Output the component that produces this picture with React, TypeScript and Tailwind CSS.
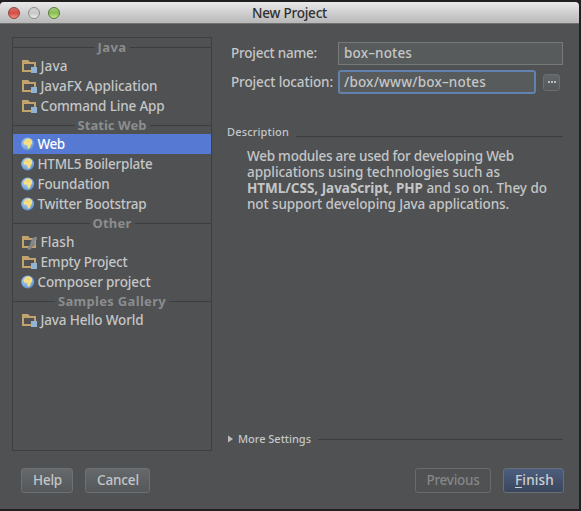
import { useLayoutEffect, useRef, useState } from 'react';
import type { ReactNode } from 'react';

/** One line of text whose tracking is adjusted so that it fills the given width. */
function Label({ width, className = '', children }: { width: number; className?: string; children: ReactNode }) {
  const ref = useRef<HTMLSpanElement>(null);
  const [tracking, setTracking] = useState(0);
  useLayoutEffect(() => {
    const el = ref.current;
    if (!el) return;
    el.style.letterSpacing = '0px';
    const natural = el.getBoundingClientRect().width;
    const next = (width - natural) / (el.textContent?.length || 1);
    el.style.letterSpacing = `${next}px`;
    setTracking(next);
  }, [width]);
  return (
    <span ref={ref} className={`inline-block shrink-0 whitespace-nowrap ${className}`} style={{ letterSpacing: tracking }}>
      {children}
    </span>
  );
}

function FolderIcon({ flash = false }: { flash?: boolean }) {
  return (
    <svg width="16" height="16" viewBox="0 0 16 16" className="shrink-0">
      <path d="M1 2h6l2 2h6v10H1zM3 6v6h10V6z" fill="#c1a36b" fillRule="evenodd" />
      {flash ? (
        <path d="M15.800 3c-4 0-5 2-6 5l-1 3c-.5 1.500-1 2-2 2v2.800c3.500 0 4.500-1.800 5.500-4.800h2V8.200h-1c.5-1.500 1-2.200 2.500-2.200z" fill="#85878a" />
      ) : (
        <path d="M10 9h6v6h-6z" fill="#91b4d4" />
      )}
    </svg>
  );
}

function GlobeIcon() {
  return (
    <svg width="14" height="14" viewBox="0 0 14 14" className="shrink-0">
      <defs>
        <radialGradient id="sea" cx=".4" cy=".35" r=".75">
          <stop offset="0" stopColor="#b4d2ef" />
          <stop offset=".65" stopColor="#78a8e0" />
          <stop offset="1" stopColor="#4a80c6" />
        </radialGradient>
      </defs>
      <circle cx="6.700" cy="7" r="6.500" fill="url(#sea)" />
      <path d="M3.400 4 4.800 2.300 7 1.500l2.300.5 1.700 1.400.1 3.200-1.400 1.600-.4 2.100-1.400 1.500-1.200-.4-.3-2.800-.9-.9-2.300-.1-.8-1.800z" fill="#f7df80" />
      <path d="M5.300 3.800l1.800.7 2-.5" stroke="#d0c684" strokeWidth=".6" fill="none" />
    </svg>
  );
}

function Heading({ text, width }: { text: string; width: number }) {
  return (
    <div className="flex h-[18px] items-center text-[13px] font-bold text-[#8b8d8f]">
      <div className="h-px flex-1 bg-[#3b3d3e]" />
      <Label width={width} className="mx-[3px] leading-[18px]">{text}</Label>
      <div className="h-px flex-1 bg-[#3b3d3e]" />
    </div>
  );
}

type Kind = 'folder' | 'flash' | 'globe';

function Row({ text, width, kind = 'folder', selected = false }: { text: string; width: number; kind?: Kind; selected?: boolean }) {
  return (
    <div className={`flex h-5 items-center pl-2 ${selected ? 'bg-[#567ad3] text-white' : ''}`}>
      {kind === 'globe' ? <GlobeIcon /> : <FolderIcon flash={kind === 'flash'} />}
      <Label width={width} className={`pt-px leading-[19px] ${kind === 'globe' ? 'ml-[2.500px]' : 'ml-[3.500px]'}`}>{text}</Label>
    </div>
  );
}

function TitleBar() {
  return (
    <div className="relative flex h-[22px] shrink-0 items-center justify-center rounded-t-[4px] border-b border-[#707070] bg-linear-to-b from-[#e9e9e9] to-[#b8b8b8] text-[#303030]">
      <div className="absolute left-2 top-[5px] flex gap-2">
        <div className="size-3 rounded-full border border-[#8f413b] bg-linear-to-b from-[#d0716a] via-[#d64c43] to-[#f08d80]" />
        <div className="size-3 rounded-full border border-[#8b8b8b] bg-linear-to-b from-[#d6d6d6] via-[#c6c6c6] to-[#ececec]" />
        <div className="size-3 rounded-full border border-[#557a35] bg-linear-to-b from-[#a5cb7d] via-[#86bd51] to-[#c3ee90]" />
      </div>
      <Label width={75} className="leading-5">New Project</Label>
    </div>
  );
}

function Sidebar() {
  return (
    <div className="h-[414px] w-[200px] shrink-0 border border-[#3c3e3f]">
      <Heading text="Java" width={29} />
      <Row text="Java" width={27} />
      <Row text="JavaFX Application" width={117} />
      <Row text="Command Line App" width={124} />
      <Heading text="Static Web" width={69} />
      <Row text="Web" width={27} kind="globe" selected />
      <Row text="HTML5 Boilerplate" width={115} kind="globe" />
      <Row text="Foundation" width={72} kind="globe" />
      <Row text="Twitter Bootstrap" width={109} kind="globe" />
      <Heading text="Other" width={39} />
      <Row text="Flash" width={34} kind="flash" />
      <Row text="Empty Project" width={87} />
      <Row text="Composer project" width={113} kind="globe" />
      <Heading text="Samples Gallery" width={108} />
      <Row text="Java Hello World" width={103} />
    </div>
  );
}

function Details() {
  return (
    <div className="ml-[15px] flex h-[414px] w-[336px] flex-col">
      <div className="mt-[5px] flex h-[23px] items-center">
        <Label width={86} className="ml-[4px]">Project name:</Label>
        <div className="ml-auto flex h-[23px] w-[225px] items-center border border-[#767a7b] bg-[#575b5c] pl-[5px]">
          <Label width={68}>box–notes</Label>
        </div>
      </div>
      <div className="mt-[5px] flex h-6 items-center">
        <Label width={102} className="ml-[4px] pt-px">Project location:</Label>
        <div className="ml-[5px] flex h-6 w-[198px] items-center rounded-[3px] border-2 border-[#6181ae] bg-[#575b5c] pl-[4px] pt-px">
          <Label width={142}>/box/www/box–notes</Label>
        </div>
        <div className="ml-[7px] flex h-[17px] w-[17px] items-center justify-center gap-px rounded-[3px] border border-[#6b6f71] bg-linear-to-b from-[#626668] to-[#54585b]">
          <i className="size-[2px] bg-[#bbbbbb]" />
          <i className="size-[2px] bg-[#bbbbbb]" />
          <i className="size-[2px] bg-[#bbbbbb]" />
        </div>
      </div>
      <div className="mt-[30px] flex h-4 text-[11px] leading-4">
        <Label width={62}>Description</Label>
        <div className="ml-[7px] mt-[12px] h-px flex-1 bg-[#3b3d3e]" />
      </div>
      <div className="mt-[8px] flex flex-col items-start pl-5 leading-4">
        <Label width={267} className="h-4">Web modules are used for developing Web</Label>
        <Label width={253} className="h-4">applications using technologies such as</Label>
        <Label width={300} className="h-4"><b>HTML/CSS, JavaScript, PHP</b> and so on. They do</Label>
        <Label width={262} className="h-4">not support developing Java applications.</Label>
      </div>
      <div className="mb-[4px] mt-auto flex h-4 items-center pl-px text-[11px] leading-4">
        <svg width="5" height="8" viewBox="0 0 5 8"><path d="M0 .5v7L5 4z" fill="#bbbdbe" /></svg>
        <Label width={73} className="ml-[5px]">More Settings</Label>
        <div className="ml-[7px] h-px flex-1 bg-[#3b3d3e]" />
      </div>
    </div>
  );
}

function Footer() {
  return (
    <div className="mt-[17px] flex h-[25px] pl-[21px] pr-[15px]">
      <button className="flex h-[25px] w-[52px] items-center justify-center rounded-[3px] border border-[#6d7173] bg-linear-to-b from-[#65696b] to-[#54585b] pl-px"><Label width={29}>Help</Label></button>
      <button className="ml-3 flex h-[25px] w-[65px] items-center justify-center rounded-[3px] border border-[#6d7173] bg-linear-to-b from-[#65696b] to-[#54585b] pl-px"><Label width={42}>Cancel</Label></button>
      <button className="ml-auto flex h-[25px] w-[76px] items-center justify-center rounded-[3px] border border-[#696b6c] text-[#858788]"><Label width={53}>Previous</Label></button>
      <button className="ml-3 flex h-[25px] w-[61px] items-center justify-center rounded-[3px] border border-[#686f78] bg-linear-to-b from-[#4d5e7e] to-[#39465d] pl-[2px] text-[#d0d0d0]"><Label width={39}><span className="inline-block border-b border-current leading-[14px]">F</span>inish</Label></button>
    </div>
  );
}

export default function App() {
  return (
    <div className="h-[511px] w-[581px] overflow-hidden bg-[#211f20] pt-[2px] font-['Noto_Sans',sans-serif] text-[13.500px] font-medium text-[#c5c6c7]">
      <div className="flex h-[507px] w-[579px] flex-col rounded-t-[4px] bg-[#4f5152]">
        <TitleBar />
        <div className="mt-[13px] flex pl-3">
          <Sidebar />
          <Details />
        </div>
        <Footer />
      </div>
    </div>
  );
}
